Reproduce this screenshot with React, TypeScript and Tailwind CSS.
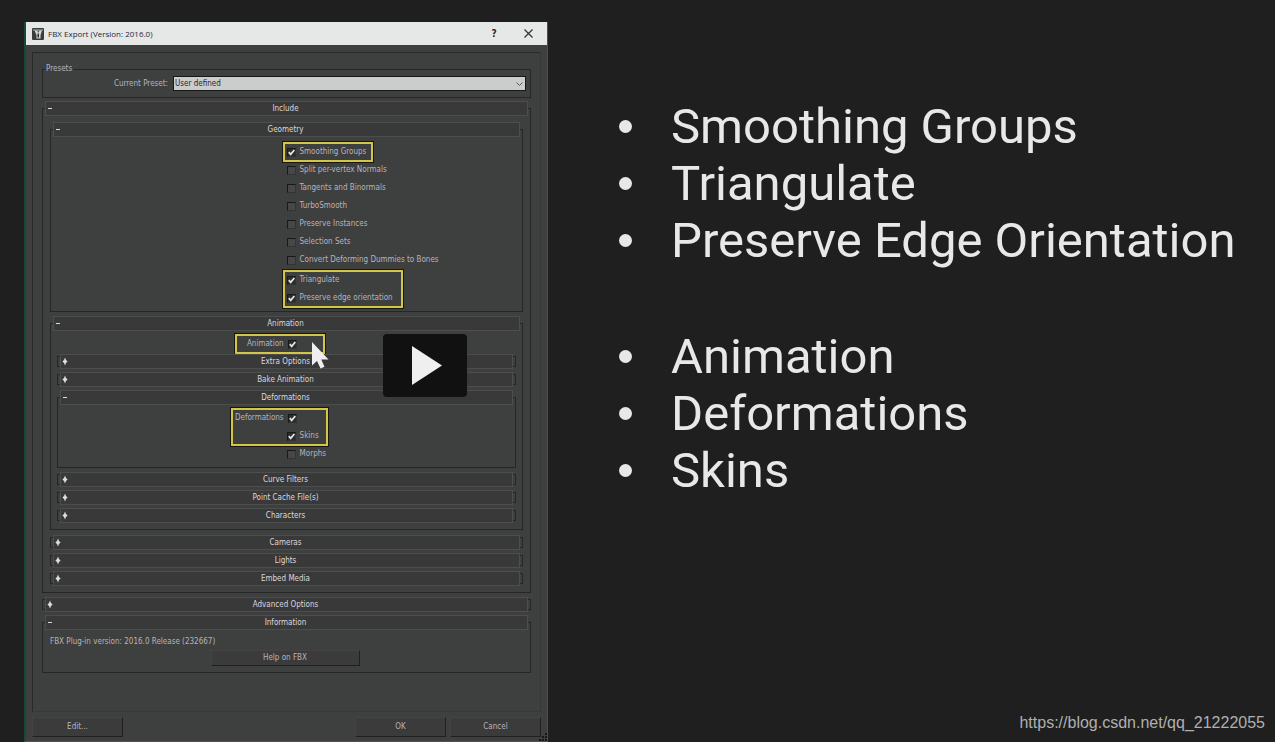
import React, { useState } from 'react';
import { clsx } from 'clsx';

interface RollupProps {
  title: string;
  open?: boolean;
  className?: string;
  bodyClassName?: string;
  children?: React.ReactNode;
}

function Rollup({ title, open = false, className, bodyClassName, children }: RollupProps) {
  const [expanded, setExpanded] = useState(open);

  return (
    <section className={className}>
      <div className="grid">
        {!expanded && (
          <div className="col-start-1 row-start-1 my-[2px] border border-[#262626]" />
        )}
        <button
          type="button"
          aria-expanded={expanded}
          onClick={() => setExpanded(!expanded)}
          className="relative z-10 col-start-1 row-start-1 mx-[3px] flex h-[15px] items-center border border-[#4c4d4d] bg-[#393939] text-[#dcd8de]"
        >
          <svg className="h-[9px] w-[7px] shrink-0" viewBox="0 0 7 9" fill="#dcdcdc">
            {expanded ? (
              <path d="M2 4h4v1H2z" />
            ) : (
              <path d="M4 0.5l1 2.5 1.6 1.5L5 6 4 8.5 3 6 1.4 4.5 3 3z" />
            )}
          </svg>
          <span className="flex-1 pr-[9px] text-center">{title}</span>
        </button>
      </div>
      {expanded && (
        <div className={clsx('-mt-2 border border-[#262626] pt-[7px]', bodyClassName)}>
          {children}
        </div>
      )}
    </section>
  );
}

interface CheckProps {
  label: string;
  checked?: boolean;
  labelFirst?: boolean;
  className?: string;
}

function Check({ label, checked = false, labelFirst = false, className }: CheckProps) {
  return (
    <label className={clsx('flex h-[18px] items-center gap-1 whitespace-nowrap', className)}>
      {labelFirst && <span>{label}</span>}
      <span className="grid">
        <input
          type="checkbox"
          defaultChecked={checked}
          className="peer col-start-1 row-start-1 size-[9px] appearance-none border border-r-[#333] border-b-[#333] border-t-[#191919] border-l-[#191919] bg-[#474747] checked:bg-[#2c2c2c]"
        />
        <svg
          className="pointer-events-none col-start-1 row-start-1 hidden size-[9px] peer-checked:block"
          viewBox="0 0 9 9"
          fill="none"
          stroke="#e4e4e4"
          strokeWidth="1.8"
        >
          <path d="M1.8 4.2l1.900 2.100L7.300 2" />
        </svg>
      </span>
      {!labelFirst && <span>{label}</span>}
    </label>
  );
}

function Highlight({ className, children }: { className?: string; children: React.ReactNode }) {
  return (
    <div
      className={clsx(
        'outline-2 -outline-offset-1 outline-[#d3c548] shadow-[0_0_0_2px_#17160f]',
        className,
      )}
    >
      {children}
    </div>
  );
}

function PushButton({ className, children }: { className?: string; children: React.ReactNode }) {
  return (
    <button
      type="button"
      className={clsx(
        'border border-t-[#444] border-l-[#444] border-r-[#202020] border-b-[#202020] bg-[#3b3b3b]',
        className,
      )}
    >
      {children}
    </button>
  );
}

function TitleBar() {
  return (
    <header className="flex h-[23px] items-center bg-[#e6e8e7] pr-[2px] pl-[6px] text-[#2b2440]">
      <svg className="size-3" viewBox="0 0 12 12">
        <rect width="12" height="12" rx="1" fill="#3a3d3e" />
        <path d="M1 1h10v2H1z" fill="#777b7c" />
        <path d="M2.5 2.5h3L6 5l1.5-2.5H10L8.500 7v3.500H4.500V7z" fill="#d5d8d8" />
        <path d="M5.500 5.500h1.500v4H5.500z" fill="#26292a" />
      </svg>
      <h1 className="ml-1 flex-1 font-['Open_Sans',sans-serif] text-[8px]">
        FBX Export (Version: 2016.0)
      </h1>
      <button type="button" aria-label="Help" className="w-[34px] text-[10px] font-bold text-[#2a2a2a]">
        ?
      </button>
      <button type="button" aria-label="Close" className="flex w-[34px] justify-center">
        <svg className="size-[9px]" viewBox="0 0 9 9" stroke="#333" strokeWidth="1.2">
          <path d="M0.500 0.500l8 8M8.500 0.500l-8 8" />
        </svg>
      </button>
    </header>
  );
}

function Presets() {
  return (
    <fieldset className="border border-[#262626] pr-1 pb-[6px]">
      <legend className="ml-[2px] h-3 px-px leading-3">Presets</legend>
      <div className="mt-px flex items-center">
        <label htmlFor="preset" className="w-[130px] pr-[5px] text-right">
          Current Preset:
        </label>
        <div className="grid flex-1">
          <select
            id="preset"
            className="col-start-1 row-start-1 h-[15px] appearance-none border border-[#181818] bg-[#cbcccc] pl-px text-[#241f3c]"
          >
            <option>User defined</option>
          </select>
          <svg
            className="pointer-events-none col-start-1 row-start-1 mr-[3px] h-1 w-[7px] self-center justify-self-end"
            viewBox="0 0 7 4"
            fill="none"
            stroke="#555"
          >
            <path d="M0.500 0.500l3 3 3-3" />
          </svg>
        </div>
      </div>
    </fieldset>
  );
}

const normals = [
  'Split per-vertex Normals',
  'Tangents and Binormals',
  'TurboSmooth',
  'Preserve Instances',
  'Selection Sets',
  'Convert Deforming Dummies to Bones',
];

function ExportDialog() {
  return (
    <div className="ml-[24px] flex flex-col border-r border-b border-l-2 border-r-[#1f6650] border-b-[#505151] border-l-[#17493a] bg-[#3e3f3f] font-['DejaVu_Sans_Condensed','DejaVu_Sans',sans-serif] text-[8px] leading-3 text-[#b9b3bc]">
      <TitleBar />
      <main className="mx-[6px] mt-[7px] flex-1 border border-t-[#292929] border-l-[#292929] border-r-[#383838] border-b-[#383838] px-[9px] pt-[10px]">
        <Presets />

        <Rollup title="Include" open className="mt-[3px]" bodyClassName="px-[7px] pb-[6px]">
          <Rollup title="Geometry" open className="mt-[6px]" bodyClassName="pb-1">
            <div className="mt-[6px] grid grid-cols-[233fr_239fr]">
              <div className="col-start-2">
                <Highlight className="w-[88px] pl-[3px]">
                  <Check label="Smoothing Groups" checked />
                </Highlight>
                <div className="pl-[3px]">
                  {normals.map((label) => (
                    <Check key={label} label={label} />
                  ))}
                </div>
                <Highlight className="mt-[2px] w-[118px] pl-[3px]">
                  <Check label="Triangulate" checked />
                  <Check label="Preserve edge orientation" checked />
                </Highlight>
              </div>
            </div>
          </Rollup>

          <Rollup title="Animation" open className="mt-1" bodyClassName="px-[6px] pb-[6px]">
            <div className="mt-1 grid grid-cols-[179fr_281fr]">
              <Highlight className="relative col-start-2 w-[88px]">
                <Check label="Animation" checked labelFirst className="w-[61px] justify-end" />
                <svg
                  className="absolute top-[7px] left-[76px] z-20 h-[27px] w-[18px]"
                  viewBox="0 0 18 27"
                  fill="#efedf0"
                >
                  <path d="M0 0v23.500l5-4.500 3.500 7.500 4-1.800L9.300 17.500h7.200z" />
                </svg>
              </Highlight>
            </div>
            <div className="mt-px flex flex-col gap-[3px]">
              <Rollup title="Extra Options" />
              <Rollup title="Bake Animation" />
              <Rollup title="Deformations" open bodyClassName="pb-1">
                <div className="mt-1 grid grid-cols-[174fr_284fr]">
                  <div className="col-start-2">
                    <Highlight className="w-[95px]">
                      <Check label="Deformations" checked labelFirst className="w-[65px] justify-end" />
                      <Check label="Skins" checked className="pl-[55px]" />
                    </Highlight>
                    <Check label="Morphs" className="pl-[55px]" />
                  </div>
                </div>
              </Rollup>
              <Rollup title="Curve Filters" className="mt-px" />
              <Rollup title="Point Cache File(s)" />
              <Rollup title="Characters" />
            </div>
          </Rollup>

          <div className="mt-[5px] flex flex-col gap-[3px]">
            <Rollup title="Cameras" />
            <Rollup title="Lights" />
            <Rollup title="Embed Media" />
          </div>
        </Rollup>

        <Rollup title="Advanced Options" className="mt-1" />
        <Rollup title="Information" open className="mt-[3px]" bodyClassName="px-[7px] pb-[6px]">
          <p className="mt-[6px]">FBX Plug-in version: 2016.0 Release (232667)</p>
          <div className="mt-[2px] flex justify-center pr-[3px]">
            <PushButton className="h-4 w-[149px]">Help on FBX</PushButton>
          </div>
        </Rollup>
      </main>
      <footer className="relative mt-[5px] flex gap-1 px-[6px] pb-1">
        <PushButton className="h-5 w-[91px]">Edit...</PushButton>
        <PushButton className="ml-auto h-5 w-[91px]">OK</PushButton>
        <PushButton className="h-5 w-[91px]">Cancel</PushButton>
        <svg className="absolute right-0 bottom-0 size-2" viewBox="0 0 8 8" fill="#171717">
          <path d="M6 0h2v2H6zM3 3h2v2H3zM6 3h2v2H6zM0 6h2v2H0zM3 6h2v2H3zM6 6h2v2H6z" />
        </svg>
      </footer>
    </div>
  );
}

function Notes({ items }: { items: string[] }) {
  return (
    <ul>
      {items.map((item) => (
        <li key={item} className="flex items-center gap-[39px] whitespace-nowrap">
          <span className="size-[13px] shrink-0 rounded-full bg-[#e8e8e8]" />
          {item}
        </li>
      ))}
    </ul>
  );
}

export default function App() {
  return (
    <div className="relative grid min-h-screen grid-cols-[548fr_727fr] bg-[#1f1f1f] pt-[22px]">
      <ExportDialog />
      <div className="flex flex-col pt-[76px] pl-[71px] font-[Roboto,sans-serif] text-[49px] leading-[57px] text-[#e8e8e8]">
        <Notes items={['Smoothing Groups', 'Triangulate', 'Preserve Edge Orientation']} />
        <div className="mt-[59px]">
          <Notes items={['Animation', 'Deformations', 'Skins']} />
        </div>
        <a
          href="https://blog.csdn.net/qq_21222055"
          className="mt-auto mr-[10px] mb-[9px] self-end font-['Liberation_Sans',Arial,sans-serif] text-[16px] leading-5 text-[#b0b0b0]"
        >
          https://blog.csdn.net/qq_21222055
        </a>
      </div>
      <button
        type="button"
        aria-label="Play"
        className="absolute top-[334px] left-1/3 z-30 flex h-[63px] w-[84px] -translate-x-1/2 items-center justify-center rounded-[4px] bg-[#111111]"
      >
        <svg className="ml-1 h-[39px] w-[30px]" viewBox="0 0 30 39" fill="#efefef">
          <path d="M0 0l30 19.500L0 39z" />
        </svg>
      </button>
    </div>
  );
}
